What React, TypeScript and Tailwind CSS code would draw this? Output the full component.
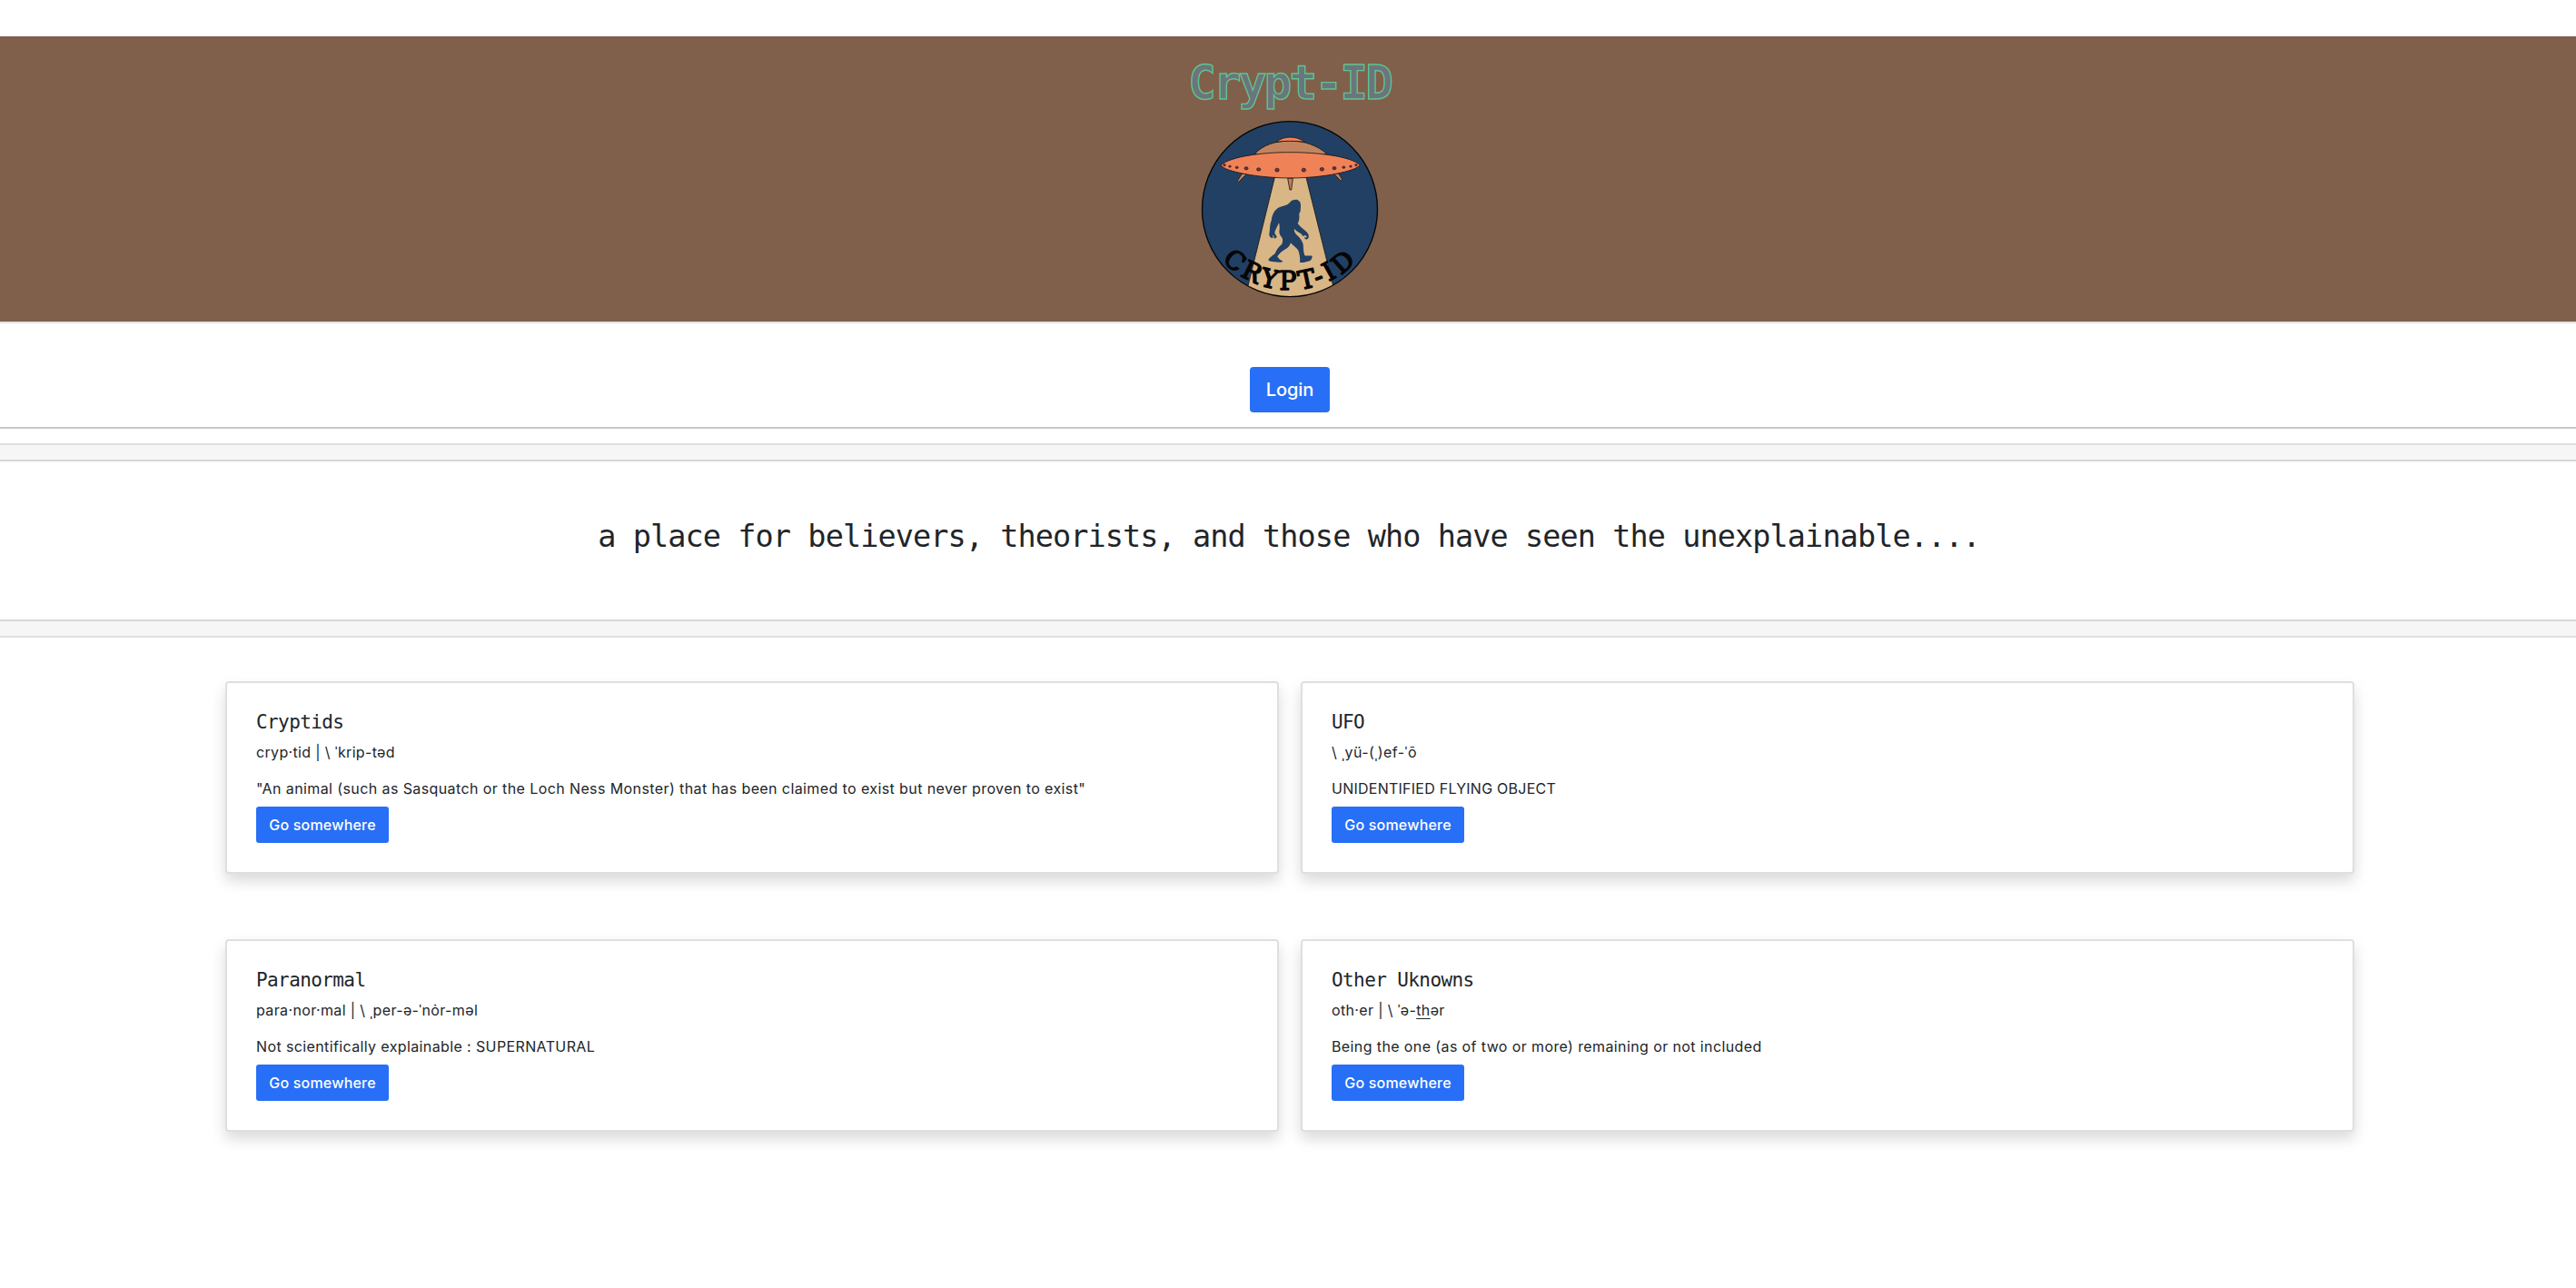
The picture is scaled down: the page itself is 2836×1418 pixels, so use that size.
import type { ReactNode } from "react";

type Topic = { title: string; sound: ReactNode; soundClass: string; text: string; textClass: string };

const topics: Topic[] = [
  {
    title: "Cryptids",
    sound: "cryp·tid | \\ ˈkrip-təd",
    soundClass: "tracking-[0.34px]",
    text: '"An animal (such as Sasquatch or the Loch Ness Monster) that has been claimed to exist but never proven to exist"',
    textClass: "tracking-[0.4px]",
  },
  {
    title: "UFO",
    sound: "\\ ˌyü-(ˌ)ef-ˈō",
    soundClass: "tracking-[0.47px]",
    text: "UNIDENTIFIED FLYING OBJECT",
    textClass: "tracking-[0.25px]",
  },
  {
    title: "Paranormal",
    sound: "para·nor·mal | \\ ˌper-ə-ˈnȯr-məl",
    soundClass: "tracking-[0.37px]",
    text: "Not scientifically explainable : SUPERNATURAL",
    textClass: "tracking-[0.38px]",
  },
  {
    title: "Other Uknowns",
    sound: (
      <>
        oth·er | \ ˈə-<span className="underline decoration-1 underline-offset-[3px]">th</span>ər
      </>
    ),
    soundClass: "tracking-[0.35px]",
    text: "Being the one (as of two or more) remaining or not included",
    textClass: "tracking-[0.39px]",
  },
];

const portholes = [
  [173, 453, 4, 3],
  [191, 457.5, 4, 3],
  [214, 461, 4.5, 3.5],
  [245, 464, 6, 5],
  [286, 467.5, 6.5, 5],
  [347, 469.5, 6.5, 6],
  [435, 469.5, 6.5, 6],
  [495, 467, 6.5, 5.5],
  [536, 463.5, 6, 5],
  [567, 460.5, 4.5, 3.5],
  [590, 457.5, 4, 3],
  [608, 453, 4, 3],
];

function Logo() {
  return (
    <svg viewBox="89 298 600 600" className="size-[200px]" stroke="#1b1414" strokeWidth="2.5" strokeLinejoin="round">
      <defs>
        <clipPath id="disc">
          <circle cx="389" cy="598.5" r="290" />
        </clipPath>
        <path id="arc" d="M139 734 A303 303 0 0 0 639 734" />
      </defs>
      <circle cx="389" cy="598.5" r="290" fill="#214064" stroke="none" />
      <path d="M340 490 L249 860 V900 H534 V860 L442 490Z" fill="#d9b686" clipPath="url(#disc)" />
      <circle cx="389" cy="598.5" r="289.5" fill="none" stroke="#050505" strokeWidth="4" />
      <g fill="#c08560">
        <path d="M231 482 L247 482 L223 506 C221 510 215 509 217 504Z" />
        <path d="M535 482 L550 481 L561 500 C563 505 556 506 554 502Z" />
        <path d="M273 417 C299 386 345 373 390 373 C436 373 480 388 512 417 L390 430Z" />
      </g>
      <path d="M344 377 C368 356 412 356 439 377 C410 373 370 373 344 377Z" fill="#f08258" />
      <path
        d="M161 453 C196 424 300 411 390 411 C480 411 590 424 621 453 C608 473 500 496 390 496 C285 496 170 474 161 453Z"
        fill="#f08258"
      />
      <path d="M382 497 H399 L394 535 H389Z" fill="#c87a5c" />
      <g fill="#713548" strokeWidth="2">
        {portholes.map(([cx, cy, rx, ry]) => (
          <ellipse key={cx} cx={cx} cy={cy} rx={rx} ry={ry} />
        ))}
      </g>
      <path
        transform="translate(300 540)"
        fill="#214064"
        stroke="none"
        d="M92 33 C98 28 108 26 114 28 C122 31 126 38 125 50 L124 66 C122 70 119 72 120 78 C121 88 120 98 115 106 L122 114 C130 122 142 130 149 140 C153 148 152 154 147 158 C141 160 137 155 138 151 C142 154 146 152 144 147 C140 144 137 146 132 148 C130 142 124 138 118 135 C112 132 108 128 104 124 C102 130 105 136 112 144 C122 152 132 166 133 176 C134 188 134 200 138 212 C146 214 156 211 163 213 C163 222 158 230 150 231 C142 231 132 238 122 234 C124 220 121 208 118 198 C115 188 100 180 92 170 C90 178 84 186 76 190 C64 196 54 206 48 215 C52 224 60 228 66 231 C64 235 50 234 38 233 C28 233 20 231 18 227 C20 220 32 212 40 206 C44 196 52 182 62 176 C66 168 66 162 64 154 C58 146 54 140 54 132 C56 124 55 110 53 104 C50 112 44 122 40 132 C38 138 40 142 46 148 C46 154 40 157 36 154 C38 150 36 146 33 144 C32 150 36 152 32 155 C24 154 20 148 21 140 C24 124 22 110 28 96 C30 80 36 66 46 58 C58 46 78 52 92 33Z"
      />
      <text
        className="font-['DejaVu_Serif',serif] text-[84px]"
        fill="#050505"
        stroke="#050505"
        strokeWidth="4.5"
        textAnchor="middle"
        letterSpacing="12"
      >
        <textPath href="#arc" startOffset="50.5%">
          CRYPT-ID
        </textPath>
      </text>
    </svg>
  );
}

function TopicCard({ topic }: { topic: Topic }) {
  return (
    <article className="h-[212px] rounded-[4px] border-2 border-[#dfdfdf] bg-white px-8 pt-[31px] shadow-[0_8px_16px_rgba(0,0,0,0.15)]">
      <h2 className="mb-[9px] font-['DejaVu_Sans_Mono',monospace] text-[21px] leading-6 tracking-[-0.6px]">
        {topic.title}
      </h2>
      <p className={`mb-4 ${topic.soundClass}`}>{topic.sound}</p>
      <p className={`mb-2 ${topic.textClass}`}>{topic.text}</p>
      <button className="flex h-10 w-[146px] items-center justify-center rounded-[3px] bg-[#276ff6] font-medium tracking-[0.2px] text-white">
        Go somewhere
      </button>
    </article>
  );
}

export default function App() {
  return (
    <div className="min-h-[1418px] bg-white pt-10 font-['Inter',sans-serif] text-[16px] leading-6 text-[#212529]">
      <header className="flex h-[316px] flex-col items-center border-b-2 border-[#dee2e6] bg-[#80604b] pt-[22px] pl-[3px]">
        <h1 className="h-[68px] font-['DejaVu_Sans_Mono',monospace] text-[51px] leading-[60px] font-bold tracking-[-2.8px] text-[#6c757d] [-webkit-text-stroke:1.4px_#5fc48d]">
          Crypt-ID
        </h1>
        <Logo />
      </header>
      <div className="flex h-[116px] justify-center border-b-2 border-[#c8c8c8] pt-12 pl-1">
        <button className="flex h-[50px] w-[88px] items-center justify-center rounded-[4px] bg-[#276ff6] text-[20px] font-medium tracking-[-0.1px] text-white">
          Login
        </button>
      </div>
      <div className="mt-4 h-5 border-y-2 border-t-[#dfdfdf] border-b-[#d6d6d6] bg-[#f6f6f6]" />
      <div className="flex h-[174px] items-center justify-center pb-[9px] pl-[2px]">
        <p className="font-['DejaVu_Sans_Mono',monospace] text-[33.5px] leading-[38px] tracking-[-0.91px]">
          a place for believers, theorists, and those who have seen the unexplainable....
        </p>
      </div>
      <div className="h-5 border-y-2 border-t-[#d6d6d6] border-b-[#dfdfdf] bg-[#f6f6f6]" />
      <main className="mt-12 ml-[248px] grid w-[2344px] grid-cols-2 gap-x-6 gap-y-[72px]">
        {topics.map((topic) => (
          <TopicCard key={topic.title} topic={topic} />
        ))}
      </main>
    </div>
  );
}
